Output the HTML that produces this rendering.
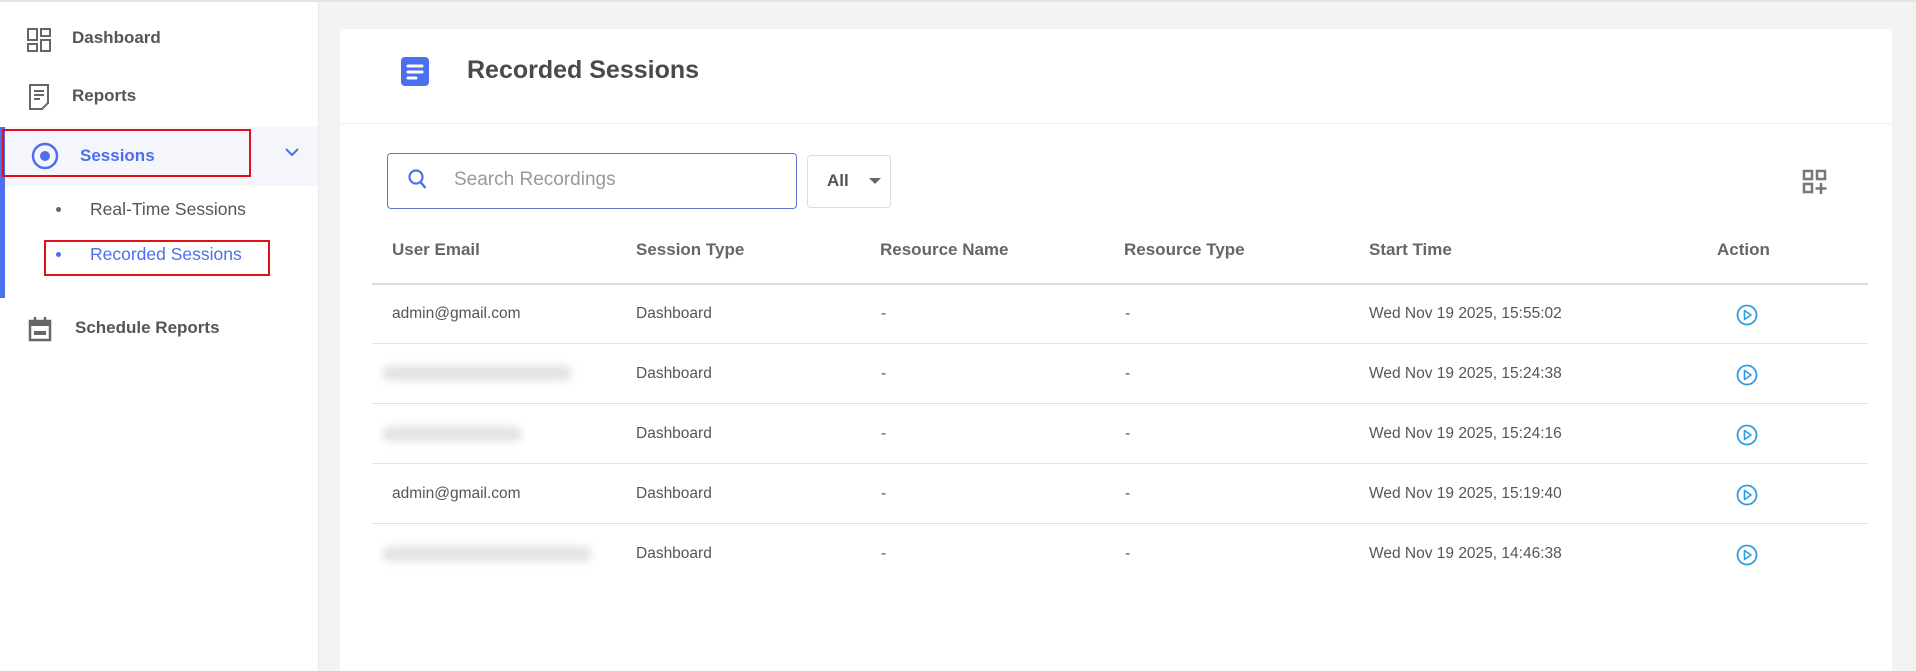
<!DOCTYPE html>
<html style="overflow:hidden;width:1916px;height:671px"><head><meta charset="utf-8"><style>
*{margin:0;padding:0;box-sizing:border-box}
body{width:1916px;height:671px;overflow:hidden;background:#f3f3f3;font-family:"Liberation Sans",sans-serif;position:relative;color:#555}
.a{position:absolute}
#top{left:0;top:0;width:1916px;height:2px;background:#e4e4e4}
#side{left:0;top:2px;width:319px;height:669px;background:#fff;border-right:1px solid #e8e8e8}
.nav{position:absolute;font-size:17px;font-weight:bold;color:#555}
.card{left:340px;top:29px;width:1552px;height:642px;background:#fff}
.th{position:absolute;top:240px;font-size:17px;font-weight:bold;color:#666}
.td{position:absolute;font-size:15.5px;color:#555}
.hl{position:absolute;left:372px;width:1496px;height:1px;background:#e2e2e2}
.blur{position:absolute;height:16px;background:#e4e4e4;filter:blur(4px);border-radius:8px}
</style></head><body>
<div class="a" id="top"></div>
<div class="a" id="side"></div>
<svg class="a" style="left:27px;top:28px" width="24" height="24" viewBox="0 0 24 24" fill="none" stroke="#666" stroke-width="2"><rect x="1" y="1" width="9" height="11"/><rect x="14" y="1" width="9" height="7"/><rect x="1" y="16" width="9" height="7"/><rect x="14" y="12" width="9" height="11"/></svg>
<div class="nav" style="left:72px;top:28px">Dashboard</div>
<svg class="a" style="left:29px;top:84px" width="20" height="26" viewBox="0 0 20 26" fill="none" stroke="#666" stroke-width="2"><path d="M1 1h18v18l-6 6H1z"/><path d="M5 7h10M5 11h10M5 15h6"/></svg>
<div class="nav" style="left:72px;top:86px">Reports</div>
<div class="a" style="left:0;top:127px;width:318px;height:59px;background:#f4f6fc"></div>
<div class="a" style="left:0;top:127px;width:5px;height:171px;background:#4d6ef0"></div>
<svg class="a" style="left:31px;top:142px" width="28" height="28" viewBox="0 0 28 28"><circle cx="14" cy="14" r="12" fill="none" stroke="#4d6ef0" stroke-width="2.5"/><circle cx="14" cy="14" r="5" fill="#4d6ef0"/></svg>
<div class="nav" style="left:80px;top:146px;color:#4d6ef0">Sessions</div>
<svg class="a" style="left:284px;top:146px" width="16" height="12" viewBox="0 0 16 12"><path d="M2 3l6 6 6-6" fill="none" stroke="#4d6ef0" stroke-width="2"/></svg>
<div class="a" style="left:2px;top:129px;width:249px;height:48px;border:2px solid #e0101a"></div>
<div class="a" style="left:56px;top:207px;width:5px;height:5px;border-radius:50%;background:#666"></div>
<div class="nav" style="left:90px;top:199px;font-weight:normal;color:#555;font-size:17.5px">Real-Time Sessions</div>
<div class="a" style="left:56px;top:252px;width:5px;height:5px;border-radius:50%;background:#4d6ef0"></div>
<div class="nav" style="left:90px;top:244px;font-weight:normal;color:#4d6ef0;font-size:17.5px">Recorded Sessions</div>
<div class="a" style="left:44px;top:240px;width:226px;height:36px;border:2px solid #e0101a"></div>
<svg class="a" style="left:28px;top:316px" width="24" height="26" viewBox="0 0 24 26"><rect x="2" y="5" width="20" height="19" fill="none" stroke="#666" stroke-width="2.5"/><rect x="2" y="5" width="20" height="5" fill="#666"/><path d="M7 1v6M17 1v6" stroke="#666" stroke-width="2.5"/><rect x="6" y="15" width="12" height="4" fill="#666"/></svg>
<div class="nav" style="left:75px;top:318px">Schedule Reports</div>
<div class="a card"></div>
<div class="a" style="left:340px;top:123px;width:1552px;height:1px;background:#eee"></div>
<svg class="a" style="left:400px;top:56px" width="30" height="31" viewBox="0 0 30 31"><rect x="1" y="1" width="28" height="29" rx="4" fill="#4d6ef0"/><path d="M8 10h14M8 16h14M8 22h8" stroke="#fff" stroke-width="3" stroke-linecap="round"/></svg>
<div class="a" style="left:467px;top:56px;font-size:25px;font-weight:bold;color:#4a4a4a">Recorded Sessions</div>
<div class="a" style="left:387px;top:153px;width:410px;height:56px;border:1px solid #5b78cc;border-radius:4px"></div>
<svg class="a" style="left:407px;top:168px" width="22" height="24" viewBox="0 0 22 24"><circle cx="9" cy="9" r="6.5" fill="none" stroke="#4d6ef0" stroke-width="2.2"/><path d="M13.5 14l5 6" stroke="#4d6ef0" stroke-width="2.4"/></svg>
<div class="a" style="left:454px;top:169px;font-size:19px;color:#999">Search Recordings</div>
<div class="a" style="left:807px;top:155px;width:84px;height:53px;border:1px solid #ddd;border-radius:4px"></div>
<div class="a" style="left:827px;top:171px;font-size:17px;font-weight:bold;color:#555">All</div>
<div class="a" style="left:869px;top:178px;width:0;height:0;border-left:6px solid transparent;border-right:6px solid transparent;border-top:6px solid #666"></div>
<svg class="a" style="left:1802px;top:169px" width="26" height="26" viewBox="0 0 26 26" fill="none" stroke="#777" stroke-width="2.5"><rect x="2" y="2" width="8" height="8"/><rect x="15" y="2" width="8" height="8"/><rect x="2" y="15" width="8" height="8"/><path d="M19 14v11M13.5 19.5h11"/></svg>
<div class="th" style="left:392px">User Email</div>
<div class="th" style="left:636px">Session Type</div>
<div class="th" style="left:880px">Resource Name</div>
<div class="th" style="left:1124px">Resource Type</div>
<div class="th" style="left:1369px">Start Time</div>
<div class="th" style="left:1717px">Action</div>
<div class="hl" style="top:283px;height:2px;background:#ddd"></div>
<div class="hl" style="top:343px"></div>
<div class="hl" style="top:403px"></div>
<div class="hl" style="top:463px"></div>
<div class="hl" style="top:523px"></div>
<div class="td" style="left:392px;top:305px">admin@gmail.com</div>
<div class="blur" style="left:382px;top:365px;width:190px"></div>
<div class="blur" style="left:382px;top:426px;width:140px"></div>
<div class="td" style="left:392px;top:485px">admin@gmail.com</div>
<div class="blur" style="left:382px;top:546px;width:210px"></div>
<div class="td" style="left:636px;top:305px">Dashboard</div>
<div class="td" style="left:636px;top:365px">Dashboard</div>
<div class="td" style="left:636px;top:425px">Dashboard</div>
<div class="td" style="left:636px;top:485px">Dashboard</div>
<div class="td" style="left:636px;top:545px">Dashboard</div>
<div class="td" style="left:881px;top:305px">-</div><div class="td" style="left:1125px;top:305px">-</div>
<div class="td" style="left:881px;top:365px">-</div><div class="td" style="left:1125px;top:365px">-</div>
<div class="td" style="left:881px;top:425px">-</div><div class="td" style="left:1125px;top:425px">-</div>
<div class="td" style="left:881px;top:485px">-</div><div class="td" style="left:1125px;top:485px">-</div>
<div class="td" style="left:881px;top:545px">-</div><div class="td" style="left:1125px;top:545px">-</div>
<div class="td" style="left:1369px;top:305px">Wed Nov 19 2025, 15:55:02</div>
<div class="td" style="left:1369px;top:365px">Wed Nov 19 2025, 15:24:38</div>
<div class="td" style="left:1369px;top:425px">Wed Nov 19 2025, 15:24:16</div>
<div class="td" style="left:1369px;top:485px">Wed Nov 19 2025, 15:19:40</div>
<div class="td" style="left:1369px;top:545px">Wed Nov 19 2025, 14:46:38</div>
<svg class="a" style="left:1736px;top:304px" width="22" height="22" viewBox="0 0 22 22"><circle cx="11" cy="11" r="9.5" fill="none" stroke="#2f9be0" stroke-width="1.8"/><path d="M8.5 6.5v9l6.5-4.5z" fill="none" stroke="#2f9be0" stroke-width="1.6" stroke-linejoin="round"/></svg>
<svg class="a" style="left:1736px;top:364px" width="22" height="22" viewBox="0 0 22 22"><circle cx="11" cy="11" r="9.5" fill="none" stroke="#2f9be0" stroke-width="1.8"/><path d="M8.5 6.5v9l6.5-4.5z" fill="none" stroke="#2f9be0" stroke-width="1.6" stroke-linejoin="round"/></svg>
<svg class="a" style="left:1736px;top:424px" width="22" height="22" viewBox="0 0 22 22"><circle cx="11" cy="11" r="9.5" fill="none" stroke="#2f9be0" stroke-width="1.8"/><path d="M8.5 6.5v9l6.5-4.5z" fill="none" stroke="#2f9be0" stroke-width="1.6" stroke-linejoin="round"/></svg>
<svg class="a" style="left:1736px;top:484px" width="22" height="22" viewBox="0 0 22 22"><circle cx="11" cy="11" r="9.5" fill="none" stroke="#2f9be0" stroke-width="1.8"/><path d="M8.5 6.5v9l6.5-4.5z" fill="none" stroke="#2f9be0" stroke-width="1.6" stroke-linejoin="round"/></svg>
<svg class="a" style="left:1736px;top:544px" width="22" height="22" viewBox="0 0 22 22"><circle cx="11" cy="11" r="9.5" fill="none" stroke="#2f9be0" stroke-width="1.8"/><path d="M8.5 6.5v9l6.5-4.5z" fill="none" stroke="#2f9be0" stroke-width="1.6" stroke-linejoin="round"/></svg>
</body></html>
